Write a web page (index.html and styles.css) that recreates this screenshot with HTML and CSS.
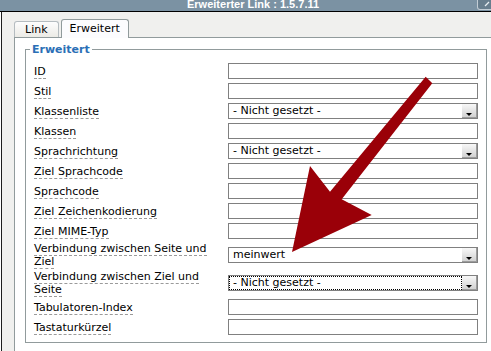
FILE: index.html
```html
<!DOCTYPE html>
<html>
<head lang="de">
    <meta charset="UTF-8">
    <title>Erweiterter Link</title>
    <link rel="stylesheet" href="styles.css">
</head>
<body>
<div class="titlebar">
    <span class="title">Erweiterter Link : 1.5.7.11</span>
    <span class="tbtn">
        <svg width="16" height="9" viewBox="0 0 16 9"><path d="M7 6 L11 2" stroke="#e8eef2" stroke-width="1.2"/></svg>
    </span>
</div>
<div class="window">
    <div class="tabs">
        <span class="tab">Link</span>
        <span class="tab current">Erweitert</span>
    </div>
    <div class="panel">
        <fieldset>
            <legend>Erweitert</legend>
            <div class="row"><label><span>ID</span></label><input type="text"></div>
            <div class="row"><label><span>Stil</span></label><input type="text"></div>
            <div class="row"><label><span>Klassenliste</span></label>
                <div class="select"><span class="val">- Nicht gesetzt -</span><span class="btn"></span></div></div>
            <div class="row"><label><span>Klassen</span></label><input type="text"></div>
            <div class="row"><label><span>Sprachrichtung</span></label>
                <div class="select"><span class="val">- Nicht gesetzt -</span><span class="btn"></span></div></div>
            <div class="row"><label><span>Ziel Sprachcode</span></label><input type="text"></div>
            <div class="row"><label><span>Sprachcode</span></label><input type="text"></div>
            <div class="row"><label><span>Ziel Zeichenkodierung</span></label><input type="text"></div>
            <div class="row"><label><span>Ziel MIME-Typ</span></label><input type="text"></div>
            <div class="row tall"><label><span>Verbindung zwischen Seite und Ziel</span></label>
                <div class="select"><span class="val">meinwert</span><span class="btn"></span></div></div>
            <div class="row tall"><label><span>Verbindung zwischen Ziel und Seite</span></label>
                <div class="select"><span class="val focus">- Nicht gesetzt -</span><span class="btn"></span></div></div>
            <div class="row"><label><span>Tabulatoren-Index</span></label><input type="text"></div>
            <div class="row"><label><span>Tastaturkürzel</span></label><input type="text"></div>
        </fieldset>
    </div>
</div>
<svg class="arrow" width="491" height="351" viewBox="0 0 491 351">
    <polygon points="425.7,76.7 432.3,83.3 341.7,199.3 371.7,215 292,252 310,166 330,191.7" fill="#9a0008"/>
</svg>
</body>
</html>
```
FILE: styles.css
```css
*{
    margin: 0;
    padding: 0;
}
html, body{
    overflow: hidden;
}
body{
    width: 491px;
    height: 351px;
    background: #fff;
    font-family: "DejaVu Sans", Verdana, sans-serif;
    font-size: 11px;
    color: #000;
}
.titlebar{
    display: flex;
    height: 11px;
    background: #7b92a3;
    border-bottom: 1px solid #000;
    overflow: hidden;
}
.title{
    padding-left: 187px;
    font: bold 11px/9px "Liberation Sans", Arial, sans-serif;
    color: #fff;
    white-space: nowrap;
}
.tbtn{
    margin-left: auto;
    margin-right: -4px;
    width: 16px;
    height: 9px;
    border: 1px solid #c3cdd5;
    border-top: none;
    border-radius: 0 0 0 3px;
    background: #687e8e;
}
.tbtn svg{
    display: block;
}
.window{
    margin-left: 1px;
    border-left: 1px solid #1e1e1e;
    background: #f0f0ee;
    height: 339px;
    padding: 7px 0 0 12px;
    overflow: hidden;
}
.tabs{
    display: flex;
    align-items: flex-end;
    gap: 2px;
    height: 19px;
    margin-bottom: -1px;
    position: relative;
    z-index: 1;
}
.tab{
    height: 16px;
    margin-bottom: 1px;
    padding: 0 10px;
    box-sizing: border-box;
    border: 1px solid #b5bcc0;
    border-bottom: none;
    border-radius: 3px 3px 0 0;
    background: linear-gradient(#fdfdfd, #ecebe6);
    line-height: 15px;
}
.tab.current{
    height: 19px;
    margin-bottom: 0;
    padding: 0 8px;
    border-color: #919b9c;
    background: #fcfcfe;
    line-height: 17px;
}
.panel{
    width: 490px;
    background: #fff;
    border: 1px solid #919b9c;
    padding: 5px 0 20px 10px;
}
fieldset{
    width: 462px;
    box-sizing: border-box;
    border: 1px solid #919b9c;
    padding: 5px 8px;
}
legend{
    margin-left: -4px;
    padding: 0 2px;
    color: #2b6fb6;
    font-weight: bold;
    line-height: 13px;
}
.row{
    display: flex;
    align-items: center;
    height: 20px;
}
.row.tall{
    height: 28px;
}
.row label{
    width: 194px;
    padding-right: 10px;
    box-sizing: border-box;
    line-height: 13px;
}
.row label span{
    border-bottom: 1px dashed #9a9a9a;
}
input{
    width: 250px;
    height: 16px;
    box-sizing: border-box;
    border: 1px solid #808080;
    background: #fff;
    font: inherit;
    outline: none;
}
.select{
    display: flex;
    width: 250px;
    height: 16px;
    box-sizing: border-box;
    border: 1px solid #808080;
    background: #fff;
}
.select .val{
    flex: 1;
    padding-left: 4px;
    line-height: 14px;
    white-space: nowrap;
}
.select .val.focus{
    outline: 1px dotted #000;
    outline-offset: -1px;
}
.select .btn{
    display: flex;
    justify-content: center;
    width: 15px;
    height: 14px;
    box-sizing: border-box;
    border-right: 1px solid #9c9c9c;
    border-bottom: 1px solid #9c9c9c;
    background: linear-gradient(#f8f8f8, #d2d2d2);
}
.select .btn:after{
    content: "";
    margin-top: 9px;
    width: 0;
    height: 0;
    border-left: 3px solid transparent;
    border-right: 3px solid transparent;
    border-top: 3px solid #000;
}
.arrow{
    position: absolute;
    left: 0;
    top: 0;
    pointer-events: none;
}
```
